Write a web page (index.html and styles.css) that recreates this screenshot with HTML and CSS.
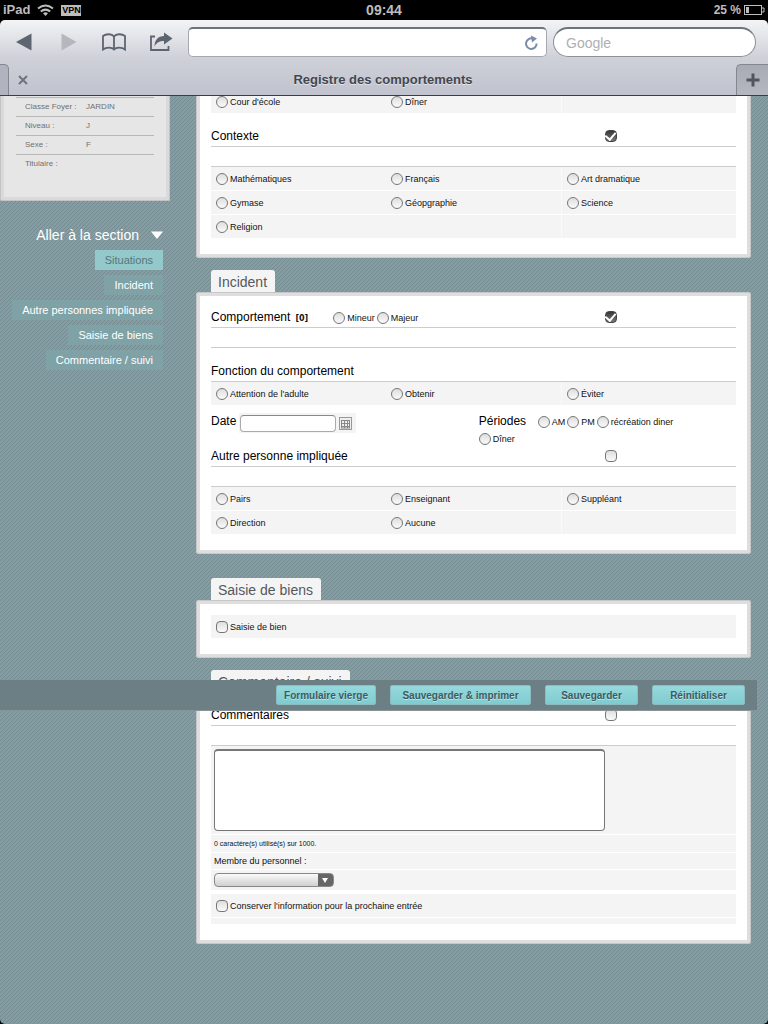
FILE: index.html
```html
<!DOCTYPE html>
<html lang="fr">
<head>
  <meta charset="UTF-8">
  <meta name="viewport" content="width=device-width, initial-scale=1">
  <title>Registre des comportements</title>
  <link rel="stylesheet" href="styles.css">
</head>
<body>
  <div class="status-bar">
    <div class="status-left">
      <span>iPad</span>
      <svg width="17" height="12" viewBox="0 0 17 12" fill="none" stroke="#bdbdbd" stroke-width="2">
        <path d="M1 4.6Q8.500 -1.600 16 4.600"/>
        <path d="M3.800 7.600Q8.500 3.600 13.200 7.600"/>
        <path d="M6 9.300Q8.500 7.300 11 9.300L8.500 12Z" fill="#bdbdbd" stroke="none"/>
      </svg>
      <span class="vpn">VPN</span>
    </div>
    <span class="clock">09:44</span>
    <div class="status-right">
      <span>25 %</span>
      <svg width="21" height="10" viewBox="0 0 21 10" fill="none" stroke="#bdbdbd">
        <rect x="0.500" y="0.500" width="17" height="9"/>
        <path d="M18 3h2v4h-2"/>
        <rect x="2" y="2" width="3" height="6" fill="#bdbdbd" stroke="none"/>
      </svg>
    </div>
  </div>

  <header class="browser">
    <div class="toolbar">
      <button type="button" class="tool" aria-label="Précédent">
        <svg width="16" height="18" viewBox="0 0 16 18"><path d="M0 9L15.500 0.500v17z" fill="#5d6570"/></svg>
      </button>
      <button type="button" class="tool" aria-label="Suivant">
        <svg width="16" height="18" viewBox="0 0 16 18"><path d="M15.500 9L0.500 0.500v17z" fill="#b4b7bd"/></svg>
      </button>
      <button type="button" class="tool" aria-label="Signets">
        <svg width="26" height="18" viewBox="0 0 26 18" fill="none" stroke="#5d6570" stroke-width="1.800">
          <path d="M13 3.500C11 0.600 5 0.600 2 3V16.500C5 14 11 14 13 16.500C15 14 21 14 24 16.500V3C21 0.600 15 0.600 13 3.500V16"/>
        </svg>
      </button>
      <button type="button" class="tool" aria-label="Partager">
        <svg width="24" height="20" viewBox="0 0 24 20">
          <path d="M6 4.500H2V18H19.500V14" fill="none" stroke="#5d6570" stroke-width="1.800"/>
          <path d="M15 0.500L23.500 6.500L15 12.500V9C10.500 9 7.500 10.500 5.500 14.500C5.500 8 9.500 4 15 4Z" fill="#5d6570"/>
        </svg>
      </button>
      <div class="address">
        <input type="text" aria-label="Adresse">
        <svg width="15" height="16" viewBox="0 0 15 16">
          <path d="M9 3.600A5.300 5.300 0 1 0 12.600 8.500" fill="none" stroke="#7b8ca8" stroke-width="2"/>
          <path d="M7 0.500L13 3.500L8 7.500Z" fill="#7b8ca8"/>
        </svg>
      </div>
      <input type="search" class="search" placeholder="Google" aria-label="Recherche">
    </div>
    <div class="tabs">
      <div class="tab-edge"></div>
      <div class="tab">
        <button type="button" class="tab-close" aria-label="Fermer">
          <svg width="10" height="10" viewBox="0 0 10 10"><path d="M1 1l8 8M9 1l-8 8" stroke="#70737c" stroke-width="2"/></svg>
        </button>
        <span class="tab-title">Registre des comportements</span>
      </div>
      <button type="button" class="tab-new" aria-label="Nouvel onglet">
        <svg width="14" height="14" viewBox="0 0 14 14"><path d="M7 0.500v13M0.500 7h13" stroke="#50555f" stroke-width="3"/></svg>
      </button>
    </div>
  </header>

  <div class="site">
    <div class="layout">
      <aside class="sidebar">
        <dl class="student-card">
          <div><dt>Classe Foyer :</dt><dd>JARDIN</dd></div>
          <div><dt>Niveau :</dt><dd>J</dd></div>
          <div><dt>Sexe :</dt><dd>F</dd></div>
          <div><dt>Titulaire :</dt><dd></dd></div>
        </dl>
        <nav class="sections">
          <button type="button" class="sections-toggle">Aller à la section
            <svg width="12" height="8" viewBox="0 0 12 8"><path d="M0 0.500h12L6 8z" fill="#fff"/></svg>
          </button>
          <a href="#situations" class="active">Situations</a>
          <a href="#incident">Incident</a>
          <a href="#autre">Autre personnes impliquée</a>
          <a href="#saisie">Saisie de biens</a>
          <a href="#commentaire">Commentaire / suivi</a>
        </nav>
      </aside>

      <form class="content" id="registre">
        <!-- Situations -->
        <section class="panel" id="situations">
          <div class="options">
            <label><input type="radio" name="lieu">Cour d'école</label>
            <label><input type="radio" name="lieu">Dîner</label>
            <span></span>
          </div>
          <div class="heading spaced">
            <h3>Contexte</h3>
            <input type="checkbox" aria-label="Contexte" checked>
          </div>
          <div class="rule"></div>
          <div class="options">
            <label><input type="radio" name="contexte">Mathématiques</label>
            <label><input type="radio" name="contexte">Français</label>
            <label><input type="radio" name="contexte">Art dramatique</label>
            <label><input type="radio" name="contexte">Gymase</label>
            <label><input type="radio" name="contexte">Géopgraphie</label>
            <label><input type="radio" name="contexte">Science</label>
            <label><input type="radio" name="contexte">Religion</label>
            <span></span>
            <span></span>
          </div>
        </section>

        <!-- Incident -->
        <h2 class="panel-tab">Incident</h2>
        <section class="panel" id="incident">
          <div class="heading">
            <div class="heading-title">
              <h3>Comportement</h3>
              <b class="count">[0]</b>
              <div class="inline-options">
                <label><input type="radio" name="gravite">Mineur</label>
                <label><input type="radio" name="gravite">Majeur</label>
              </div>
            </div>
            <input type="checkbox" aria-label="Comportement" checked>
          </div>
          <div class="rule"></div>
          <div class="heading spaced">
            <h3>Fonction du comportement</h3>
          </div>
          <div class="options">
            <label><input type="radio" name="fonction">Attention de l'adulte</label>
            <label><input type="radio" name="fonction">Obtenir</label>
            <label><input type="radio" name="fonction">Éviter</label>
          </div>
          <div class="when">
            <div class="date">
              <label for="date">Date</label>
              <div class="date-field">
                <input type="text" id="date">
                <button type="button" aria-label="Calendrier">
                  <svg width="13" height="13" viewBox="0 0 13 13" fill="none">
                    <rect x="0.500" y="0.500" width="12" height="12" fill="#eee" stroke="#999"/>
                    <path d="M2 3.500h9M2 6.500h9M2 9.500h9M2.500 3v8M5.500 3v8M8.500 3v8M10.500 3v8M2 11h9" stroke="#888"/>
                  </svg>
                </button>
              </div>
            </div>
            <div class="periods">
              <h3>Périodes</h3>
              <label><input type="radio" name="periode">AM</label>
              <label><input type="radio" name="periode">PM</label>
              <label><input type="radio" name="periode">récréation diner</label>
              <label><input type="radio" name="periode">Dîner</label>
            </div>
          </div>
          <div class="heading" id="autre">
            <h3>Autre personne impliquée</h3>
            <input type="checkbox" aria-label="Autre personne impliquée">
          </div>
          <div class="rule"></div>
          <div class="options">
            <label><input type="radio" name="personne">Pairs</label>
            <label><input type="radio" name="personne">Enseignant</label>
            <label><input type="radio" name="personne">Suppléant</label>
            <label><input type="radio" name="personne">Direction</label>
            <label><input type="radio" name="personne">Aucune</label>
            <span></span>
          </div>
        </section>

        <!-- Saisie de biens -->
        <h2 class="panel-tab far">Saisie de biens</h2>
        <section class="panel" id="saisie">
          <div class="options single">
            <label><input type="checkbox">Saisie de bien</label>
          </div>
        </section>

        <!-- Commentaire / suivi -->
        <h2 class="panel-tab">Commentaire / suivi</h2>
        <section class="panel compact" id="commentaire">
          <div class="heading">
            <h3>Commentaires</h3>
            <input type="checkbox" aria-label="Commentaires">
          </div>
          <div class="rule"></div>
          <div class="comment text">
            <textarea aria-label="Commentaires"></textarea>
          </div>
          <div class="comment counter">0 caractère(s) utilisé(s) sur 1000.</div>
          <label class="comment staff-label" for="staff">Membre du personnel :</label>
          <div class="comment staff">
            <span class="select"><select id="staff"><option></option></select></span>
          </div>
          <div class="options single keep">
            <label><input type="checkbox">Conserver l'information pour la prochaine entrée</label>
          </div>
          <div class="comment last"></div>
        </section>
      </form>
    </div>
  </div>

  <div class="actions">
    <button type="button">Formulaire vierge</button>
    <button type="button" class="print">Sauvegarder &amp; imprimer</button>
    <button type="submit" form="registre" class="short">Sauvegarder</button>
    <button type="reset" form="registre" class="short">Réinitialiser</button>
  </div>
</body>
</html>
```
FILE: styles.css
```css
* {
  box-sizing: border-box;
}
body {
  display: flex;
  flex-direction: column;
  min-height: 100vh;
  margin: 0;
  background: #000;
  color: #111;
  font-family: "Liberation Sans", Arial, sans-serif;
  font-size: 9px;
}
h2, h3, dl, dd {
  margin: 0;
  font-weight: normal;
}
button, input, select, textarea {
  margin: 0;
  padding: 0;
  border: 0;
  font-family: inherit;
}
button {
  background: none;
  cursor: pointer;
}
svg {
  display: block;
}

/* Status bar */
.status-bar {
  display: grid;
  grid-template-columns: 1fr auto 1fr;
  align-items: center;
  height: 20px;
  padding: 0 3px;
  color: #bdbdbd;
  font-size: 13px;
  font-weight: bold;
  line-height: 18px;
}
.status-left, .status-right {
  display: flex;
  align-items: center;
  gap: 7px;
}
.status-right {
  justify-content: flex-end;
  gap: 3px;
  font-size: 12px;
}
.clock {
  font-size: 14px;
}
.vpn {
  width: 20px;
  background: #bdbdbd;
  color: #000;
  font-size: 9px;
  line-height: 11px;
  text-align: center;
}

/* Browser chrome */
.browser {
  height: 76px;
  border-bottom: 1px solid #3c3c44;
  border-radius: 5px 5px 0 0;
  background: linear-gradient(#f4f4f6, #cfd1d9 50%, #c0c3ce);
}
.toolbar {
  display: flex;
  align-items: center;
  height: 44px;
  padding: 0 12px 0 10px;
}
.tool {
  display: flex;
  flex: none;
  align-items: center;
  justify-content: center;
  width: 46px;
  height: 30px;
}
.tool:first-child {
  width: 28px;
}
.tool:nth-child(2) {
  width: 62px;
}
.tool:nth-child(3) {
  width: 28px;
}
.tool:nth-child(4) {
  width: 66px;
}
.address {
  display: flex;
  flex: 1;
  align-items: center;
  height: 30px;
  margin: 0 6px 0 -6px;
  padding-right: 7px;
  border: 1px solid #a5a8b0;
  border-top: 2px solid #6f7279;
  border-radius: 5px;
  background: #fff;
}
.address input {
  flex: 1;
  min-width: 0;
  height: 24px;
  background: none;
  font-size: 14px;
}
.search {
  width: 203px;
  height: 30px;
  padding: 0 12px;
  border: 1px solid #8d9098;
  border-top: 2px solid #6f7279;
  border-radius: 15px;
  background: #fff;
  font-size: 14px;
}
.search::placeholder {
  color: #b0b0b0;
}
.tabs {
  display: flex;
  height: 31px;
}
.tab-edge {
  width: 9px;
  border-top: 1px solid #85878f;
  border-right: 1px solid #85878f;
  border-top-right-radius: 5px;
  background: #b1b3be;
}
.tab {
  display: flex;
  flex: 1;
  align-items: center;
  padding: 0 8px 0 9px;
}
.tab-title {
  flex: 1;
  padding-left: 10px;
  color: #42464f;
  font-size: 13px;
  font-weight: bold;
  text-align: center;
  text-shadow: 0 1px 0 #e4e5ea;
}
.tab-new {
  display: flex;
  align-items: center;
  justify-content: center;
  width: 32px;
  border-top: 1px solid #85878f;
  border-left: 1px solid #85878f;
  border-top-left-radius: 5px;
  background: linear-gradient(#a8aab4, #b5b7c1);
}

/* Page */
.site {
  flex: 1;
  overflow: hidden;
  border-radius: 0 0 5px 5px;
  background: linear-gradient(135deg, #758c92 12.5%, #849da2 12.5%, #849da2 50%, #758c92 50%, #758c92 62.5%, #849da2 62.5%) 0 0 / 4px 4px;
}
.layout {
  display: flex;
  margin-top: -21px;
  padding-bottom: 80px;
}
.sidebar {
  flex: none;
  width: 196px;
}
.student-card {
  width: 170px;
  padding: 18px 12px 24px;
  border: 4px solid #dadada;
  border-radius: 2px;
  outline: 1px solid #c4c4c4;
  outline-offset: -1px;
  background: #e6e6e6;
  color: #707070;
  font-size: 8px;
  line-height: 18px;
}
.student-card div {
  display: flex;
  height: 19px;
  padding-left: 9px;
  border-top: 1px solid #b8b8b8;
}
.student-card dt {
  width: 61px;
}
.sections {
  display: flex;
  flex-direction: column;
  align-items: flex-end;
  gap: 5px;
  padding: 24px 33px 0 0;
}
.sections-toggle {
  display: flex;
  align-items: center;
  gap: 12px;
  height: 20px;
  color: #fff;
  font-size: 14px;
}
.sections a {
  padding: 0 10px;
  background: #7fa2a7;
  color: #fff;
  font-size: 11px;
  line-height: 20px;
  text-decoration: none;
}
.sections a.active {
  background: #93c9ca;
  color: #56777b;
}

/* Panels */
.content {
  flex: 1;
  margin-right: 17px;
}
.panel {
  padding: 11px 11px 16px;
  border: 4px solid #dedede;
  border-radius: 3px;
  outline: 1px solid #c6c8c8;
  outline-offset: -1px;
  background: #fff;
}
.panel.compact {
  padding-top: 9px;
}
.panel-tab {
  width: fit-content;
  height: 22px;
  margin: 12px 0 0 15px;
  padding: 0 8px 0 7px;
  border-radius: 3px 3px 0 0;
  background: #f4f4f4;
  color: #55585c;
  font-size: 14px;
  line-height: 25px;
}
.panel-tab.far {
  margin-top: 24px;
}
.heading {
  display: grid;
  grid-template-columns: 75% 1fr;
  align-items: center;
  height: 21px;
  border-bottom: 1px solid #ccc;
}
.heading.spaced {
  margin-top: 13px;
}
.heading-title {
  display: flex;
  align-items: center;
  height: 20px;
}
h3 {
  color: #000;
  font-size: 12px;
  line-height: 20px;
}
.count {
  margin: 2px 25px 0 5px;
  font-family: "DejaVu Sans", sans-serif;
  font-size: 8px;
}
.rule {
  margin-top: 19px;
  border-top: 1px solid #ccc;
}
.options {
  display: grid;
  grid-template-columns: repeat(3, 1fr);
  row-gap: 1px;
}
.options.single {
  grid-template-columns: 1fr;
}
.options > * {
  height: 23px;
  padding-left: 5px;
  background: #f4f4f4;
}
.options > :nth-child(3n) {
  border-left: 1px solid #fafafa;
}
.options label, .inline-options label, .periods label {
  display: flex;
  align-items: center;
  gap: 2px;
}
.inline-options {
  display: flex;
  gap: 2px;
  padding-top: 2px;
}

/* Radio buttons and tick boxes */
input[type="radio"], input[type="checkbox"] {
  display: flex;
  flex: none;
  align-items: center;
  justify-content: center;
  appearance: none;
  width: 12px;
  height: 12px;
  border: 1px solid #777;
  border-radius: 50%;
  background: linear-gradient(#dedede, #fafafa);
}
input[type="checkbox"] {
  border-radius: 4px;
}
input[type="checkbox"]:checked {
  border-color: #444;
  background: linear-gradient(#383838, #777);
}
input[type="checkbox"]:checked::after {
  content: "";
  width: 5px;
  height: 8px;
  margin-bottom: 2px;
  border: solid #fff;
  border-width: 0 2px 2px 0;
  transform: rotate(40deg);
}

/* Date and periods */
.when {
  display: grid;
  grid-template-columns: 51% 49%;
  height: 41px;
  padding-top: 8px;
}
.date {
  display: flex;
  align-items: flex-start;
  gap: 3px;
}
.date label {
  color: #000;
  font-size: 12px;
  line-height: 17px;
}
.date-field {
  display: flex;
  align-items: center;
  gap: 3px;
  height: 20px;
  padding: 0 4px 0 1px;
  background: #f4f4f4;
}
.date-field input {
  width: 96px;
  height: 17px;
  border: 1px solid #aaa;
  border-top-color: #888;
  border-radius: 4px;
  background: #fff;
}
.periods {
  display: flex;
  flex-wrap: wrap;
  align-content: flex-start;
  column-gap: 2px;
  padding-right: 30px;
}
.periods h3 {
  width: 57px;
  line-height: 17px;
}
.periods label {
  height: 17px;
}

/* Comments */
.comment {
  display: block;
  padding: 0 3px;
  border-bottom: 1px solid #fff;
  background: #f4f4f4;
}
.comment.text {
  padding: 3px;
}
.comment textarea {
  display: block;
  width: 100%;
  max-width: 391px;
  height: 82px;
  border: 1px solid #777;
  border-top-width: 2px;
  border-radius: 4px;
  background: #fff;
  resize: none;
}
.counter {
  font-size: 7px;
  line-height: 17px;
}
.staff-label {
  height: 17px;
  line-height: 16px;
}
.staff {
  height: 21px;
  padding-top: 3px;
}
.select {
  display: block;
  position: relative;
  width: 120px;
  height: 14px;
}
.select select {
  display: block;
  appearance: none;
  width: 100%;
  height: 100%;
  border: 1px solid #888;
  border-radius: 4px;
  background: linear-gradient(90deg, transparent 103px, #666 103px), linear-gradient(#fafafa, #cfcfcf);
}
.select::after {
  content: "";
  position: absolute;
  top: 5px;
  right: 6px;
  border: 3px solid transparent;
  border-top: 5px solid #fff;
  border-bottom: 0;
  pointer-events: none;
}
.keep {
  margin: 3px 0 1px;
}
.comment.last {
  height: 6px;
  border: 0;
}

/* Action bar, stays over the form while it scrolls */
.actions {
  display: flex;
  position: fixed;
  top: 680px;
  right: 11px;
  left: 0;
  align-items: center;
  justify-content: flex-end;
  gap: 14px;
  height: 31px;
  padding-right: 12px;
  border-bottom: 1px solid #869498;
  background: #6c7f84;
}
.actions button {
  width: 100px;
  height: 20px;
  border: 1px solid #8bbcc0;
  border-radius: 2px;
  background: linear-gradient(#96d9dc, #80cbd0);
  color: #3f5a60;
  font-size: 10px;
  font-weight: bold;
  text-shadow: 0 1px 0 #b5e6e8;
}
.actions .print {
  width: 141px;
}
.actions .short {
  width: 93px;
}
```
